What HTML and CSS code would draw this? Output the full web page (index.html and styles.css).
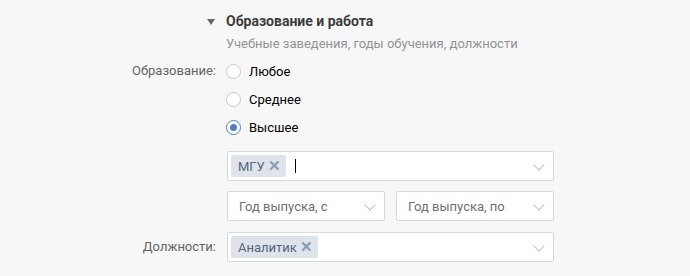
FILE: index.html
```html
<!DOCTYPE html>
<html lang="ru">
<head>
    <meta charset="UTF-8">
    <title>Образование и работа</title>
    <link rel="stylesheet" href="styles.css">
</head>
<body>
    <div class="section">
        <div class="section-header">
            <span class="caret"></span>
            <div>
                <h2>Образование и работа</h2>
                <p>Учебные заведения, годы обучения, должности</p>
            </div>
        </div>

        <div class="form-row row-radios">
            <div class="label">Образование:</div>
            <div class="radios">
                <label class="radio"><span class="radio-dot"></span>Любое</label>
                <label class="radio"><span class="radio-dot"></span>Среднее</label>
                <label class="radio checked"><span class="radio-dot"></span>Высшее</label>
            </div>
        </div>

        <div class="form-row">
            <div class="label"></div>
            <div class="fields">
                <div class="select">
                    <span class="token">МГУ <span class="token-x">✕</span></span>
                    <span class="caret-text"></span>
                    <span class="chevron"></span>
                </div>
                <div class="pair">
                    <div class="select"><span class="placeholder">Год выпуска, с</span><span class="chevron"></span></div>
                    <div class="select"><span class="placeholder">Год выпуска, по</span><span class="chevron"></span></div>
                </div>
            </div>
        </div>

        <div class="form-row row-center">
            <div class="label">Должности:</div>
            <div class="select">
                <span class="token">Аналитик <span class="token-x">✕</span></span>
                <span class="chevron"></span>
            </div>
        </div>
    </div>
</body>
</html>
```

FILE: styles.css
```css
body {
    margin: 0;
    background: #f7f7f7;
    font-family: Roboto, Arial, sans-serif;
    font-size: 13px;
    color: #000;
}
.section {
    padding-top: 12px;
}
.section-header {
    display: flex;
    padding-left: 207px;
}
.caret {
    width: 0;
    height: 0;
    margin-top: 7px;
    border-left: 4px solid transparent;
    border-right: 4px solid transparent;
    border-top: 6px solid #666;
    margin-right: 11px;
}
.section-header h2 {
    margin: 0;
    font-size: 14px;
    font-weight: 700;
    color: #3c3c3c;
    line-height: 18px;
}
.section-header p {
    margin: 6px 0 0;
    color: #939393;
    line-height: 16px;
}
.form-row {
    display: grid;
    grid-template-columns: 216px 327px;
    column-gap: 11px;
}
.label {
    text-align: right;
    color: #656565;
    line-height: 28px;
}
.row-radios {
    margin-top: 5px;
}
.radio {
    display: flex;
    align-items: center;
    height: 28px;
    margin-left: -1px;
}
.radio-dot {
    box-sizing: border-box;
    width: 15px;
    height: 15px;
    border: 1px solid #c1c9d1;
    border-radius: 50%;
    background: #fff;
    margin-right: 8px;
    display: flex;
    align-items: center;
    justify-content: center;
}
.checked .radio-dot {
    border-color: #5181b8;
}
.checked .radio-dot::after {
    content: '';
    width: 7px;
    height: 7px;
    border-radius: 50%;
    background: #5181b8;
}
.fields {
    padding-top: 10px;
    display: flex;
    flex-direction: column;
    gap: 10px;
}
.pair {
    display: grid;
    grid-template-columns: 1fr 1fr;
    gap: 11px;
}
.select {
    box-sizing: border-box;
    height: 30px;
    background: #fff;
    border: 1px solid #d3d9de;
    border-radius: 2px;
    display: flex;
    align-items: center;
    padding: 0 3px;
    position: relative;
}
.row-center {
    margin-top: 11px;
    align-items: center;
}
.token {
    background: #dfe4ea;
    color: #55677d;
    border-radius: 2px;
    height: 22px;
    line-height: 22px;
    padding: 0 5px 0 7px;
}
.token-x {
    color: #8a9bb0;
    font-size: 15px;
    font-weight: 700;
    margin-left: 0;
}
.caret-text {
    width: 1px;
    height: 14px;
    background: #000;
    margin-left: 9px;
}
.placeholder {
    color: #6f6f6f;
    padding-left: 8px;
    font-size: 13px;
}
.chevron {
    position: absolute;
    right: 10px;
    top: 9px;
    width: 7px;
    height: 7px;
    border-right: 1px solid #b8c1cc;
    border-bottom: 1px solid #b8c1cc;
    transform: rotate(45deg);
}
```
